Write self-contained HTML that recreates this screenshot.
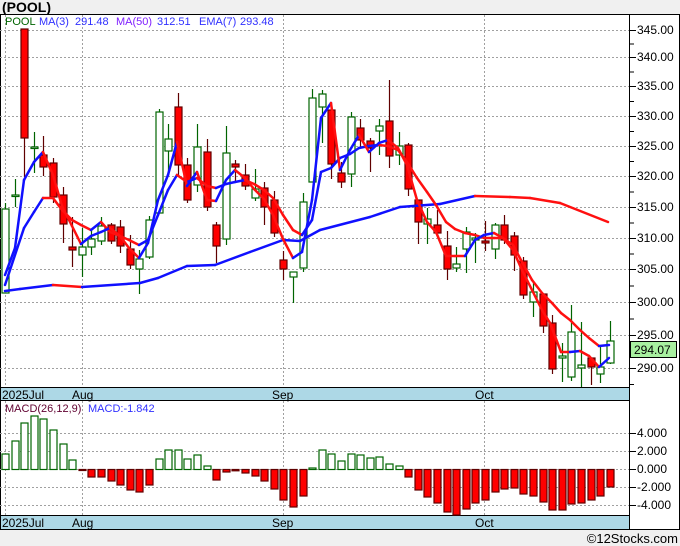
<!DOCTYPE html>
<html><head><meta charset="utf-8"><style>
html,body{margin:0;padding:0;width:680px;height:546px;background:#f0f0f0;overflow:hidden;font-family:"Liberation Sans",sans-serif}
svg{position:absolute;left:0;top:0}
</style></head><body>
<svg id="s" width="680" height="546" xmlns="http://www.w3.org/2000/svg" font-family="Liberation Sans, sans-serif">
<rect x="0" y="0" width="680" height="546" fill="#f0f0f0"/>
<text x="2" y="12" font-size="14" font-weight="bold" fill="#000">(POOL)</text>
<rect x="0.5" y="14.5" width="679" height="515" fill="#fff" stroke="#000"/>
<g id="grid" stroke="#a0a0a0" stroke-dasharray="2,2" stroke-width="1"></g>
<rect x="0.5" y="387.5" width="629" height="13" fill="#add8e6" stroke="#000"/>
<rect x="0.5" y="515.5" width="629" height="14" fill="#add8e6" stroke="#000"/>
<line x1="629.5" y1="14" x2="629.5" y2="530" stroke="#000"/>
<g font-size="12" fill="#000">
<text x="2" y="399">2025Jul</text><text x="72" y="399">Aug</text><text x="272" y="399">Sep</text><text x="475" y="399">Oct</text>
<text x="2" y="527">2025Jul</text><text x="72" y="527">Aug</text><text x="272" y="527">Sep</text><text x="475" y="527">Oct</text>
</g>
<g id="ax" font-size="12" fill="#000"></g>
<g id="macd"></g>
<g id="cand"></g>
<g id="lines" fill="none" stroke-width="2.5" stroke-linejoin="round" stroke-linecap="round"></g>
<g font-size="11">
<text x="5" y="25" fill="#006400">POOL</text>
<text x="39" y="25" fill="#3030ff">MA(3)</text>
<text x="75" y="25" fill="#3030ff">291.48</text>
<text x="116" y="25" fill="#8020ff">MA(50)</text>
<text x="157" y="25" fill="#3030ff">312.51</text>
<text x="199" y="25" fill="#3030ff">EMA(7)</text>
<text x="240" y="25" fill="#3030ff">293.48</text>
<text x="5" y="412" fill="#600030">MACD(26,12,9)</text>
<text x="88" y="412" fill="#3030ff">MACD:-1.842</text>
</g>
<rect x="630.5" y="341.5" width="46" height="16" fill="#a8f0a0" stroke="#000"/>
<text x="634" y="354" font-size="12" fill="#000">294.07</text>
<text x="678" y="543" font-size="13" fill="#000" text-anchor="end">©12Stocks.com</text>
</svg>
<script>
var NS="http://www.w3.org/2000/svg";
function el(p,t,a){var e=document.createElementNS(NS,t);for(var k in a)e.setAttribute(k,a[k]);document.getElementById(p).appendChild(e);return e;}
var pl=[[345,30],[340,57],[335,86],[330,116],[325,146],[320,176],[315,207],[310,238],[305,269],[300,302],[295,335],[290,368]];
pl.forEach(function(p){el('grid','line',{x1:0,y1:p[1]+.5,x2:630,y2:p[1]+.5});
el('ax','line',{x1:630,y1:p[1]+.5,x2:636,y2:p[1]+.5,stroke:'#000'});
var t=el('ax','text',{x:637,y:p[1]+4});t.textContent=p[0].toFixed(2);});
for(var i=0;i<pl.length-1;i++){var m=(pl[i][1]+pl[i+1][1])/2;el('ax','line',{x1:630,y1:m+.5,x2:634,y2:m+.5,stroke:'#000'});}
el('ax','line',{x1:630,y1:384.5,x2:634,y2:384.5,stroke:'#000'});
var ml=[["4.000",433],["2.000",451],["0.000",469],["-2.000",487],["-4.000",505]];
ml.forEach(function(p){el('grid','line',{x1:0,y1:p[1]+.5,x2:630,y2:p[1]+.5});
el('ax','line',{x1:630,y1:p[1]+.5,x2:636,y2:p[1]+.5,stroke:'#000'});
var t=el('ax','text',{x:637,y:p[1]+4});t.textContent=p[0];});
[5.5,82.5,283.5,484.5].forEach(function(x){el('grid','line',{x1:x,y1:15,x2:x,y2:387});el('grid','line',{x1:x,y1:401,x2:x,y2:515});});
// candles: top, bottom, high, low, red?
var C=[[209,293,203,293,0],[195,196,179,207,0],[29,138,29,177,1],[147,148,132,173,0],[155,167,136,176,1],[163,197,158,203,1],[195,224,187,243,1],[247,250,217,267,1],[247,255,228,277,0],[239,247,230,255,0],[226,241,217,245,0],[225,241,223,244,1],[227,246,220,253,1],[249,265,235,269,1],[259,269,250,294,0],[220,257,216,259,0],[112,213,109,213,0],[139,151,124,173,0],[107,165,93,176,1],[165,200,158,203,1],[147,185,124,192,0],[152,207,139,211,1],[225,246,222,263,1],[153,239,126,245,0],[164,167,160,183,1],[175,186,164,190,1],[189,198,169,201,0],[188,207,182,225,1],[200,233,191,237,1],[260,269,251,280,1],[272,277,272,303,0],[202,268,193,272,0],[98,182,89,182,0],[94,107,90,143,0],[110,164,106,179,1],[173,182,162,188,1],[117,174,112,187,0],[128,140,119,147,1],[141,148,138,172,1],[126,131,119,155,0],[121,156,80,168,1],[146,155,132,165,0],[145,189,143,196,1],[200,222,200,244,1],[219,224,208,244,0],[225,233,210,234,1],[246,269,231,280,1],[264,268,247,272,0],[232,249,227,273,0],[238,240,233,263,0],[241,243,221,251,1],[225,249,223,259,0],[225,240,215,244,1],[236,255,232,271,1],[261,295,257,299,1],[292,302,283,317,0],[294,326,294,333,1],[323,369,315,374,1],[356,358,343,382,0],[332,377,305,381,0],[365,368,322,387,0],[358,367,358,385,1],[367,374,347,383,0],[341,363,321,364,0]];
function X(i){return 5+i*9.6;}
C.forEach(function(c,i){var x=Math.round(X(i))+.5,s=c[4]?'#600000':'#006400';
el('cand','line',{x1:x,y1:c[2],x2:x,y2:c[3],stroke:s,'stroke-width':1.2});
el('cand','rect',{x:x-3.5,y:c[0],width:7,height:Math.max(1.5,c[1]-c[0]),fill:c[4]?'#ff0000':'#fff',stroke:s,'stroke-width':1.2});});
var M=[454,441,423,416,419,430,444,460,470.5,477,477,481,485,490,492,485,459,450,450,459,455,466,480,472,470.8,473,476,481,489,500,507,496,468,450,454,461,454,455,458,457,464,466,477,490,497,503,512,515,509,503,500,492,489,488,494,496,502,510,510,504,503,500,496,487];
M.forEach(function(v,i){var x=Math.round(X(i))+.5,r=v>469;
el('macd','rect',{x:x-3.5,y:r?469.5:v,width:7,height:Math.abs(v-469.5),fill:r?'#ff0000':'#fff',stroke:r?'#600000':'#006400','stroke-width':1.2});});
function line(pts,fixed){for(var i=0;i<pts.length-1;i++){var a=pts[i],b=pts[i+1];var col=fixed?fixed(a,b):(b[1]<a[1]?'#1010ff':'#ff1010');
el('lines','line',{x1:a[0],y1:a[1],x2:b[0],y2:b[1],stroke:col});}}
var ma3=[[5,275],[15,248],[24,180],[34,162],[43,152],[53,175],[62,206],[72,226],[81,244],[91,236],[101,232],[110,228],[120,236],[129,248],[139,258],[148,243],[158,200],[168,175],[177,142],[187,186],[197,172],[207,200],[216,201],[226,180],[235,170],[245,178],[254,189],[264,199],[273,215],[283,239],[293,258],[302,252],[312,200],[321,118],[331,103],[340,170],[350,150],[359,135],[369,152],[379,143],[388,140],[398,148],[407,165],[417,200],[427,222],[436,232],[446,256],[455,256],[465,256],[475,240],[484,235],[494,233],[503,238],[513,250],[522,270],[532,290],[542,310],[550,323],[561,352],[570,352],[580,351],[589,356],[599,367],[609,358]];
var ema=[[5,285],[24,228],[34,212],[43,198],[53,198],[62,210],[72,220],[81,225],[91,230],[101,222],[110,232],[120,236],[129,240],[139,245],[148,240],[158,215],[168,190],[177,175],[187,182],[197,178],[207,186],[216,188],[226,184],[235,182],[245,180],[254,184],[264,190],[273,198],[283,215],[293,230],[302,235],[312,220],[321,172],[331,168],[340,158],[350,154],[359,148],[369,146],[379,145],[388,146],[398,150],[407,162],[417,178],[427,192],[436,205],[446,222],[455,229],[465,233],[475,235],[484,238],[494,238],[503,238],[513,245],[522,262],[532,280],[542,293],[552,303],[561,313],[570,320],[580,330],[589,338],[599,346],[609,345]];
var ma50=[[5,291],[20,289],[53,285],[82,287],[140,283],[158,278],[187,266],[215,265],[250,252],[283,240],[300,241],[320,230],[370,217],[400,207],[440,204],[475,196],[510,197],[530,198],[560,203],[608,222]];
line(ma50,function(a,b){return (a[0]>=53&&b[0]<=82)||a[0]>=475?'#ff1010':'#1010ff';});
line(ema);line(ma3);
</script>
</body></html>
